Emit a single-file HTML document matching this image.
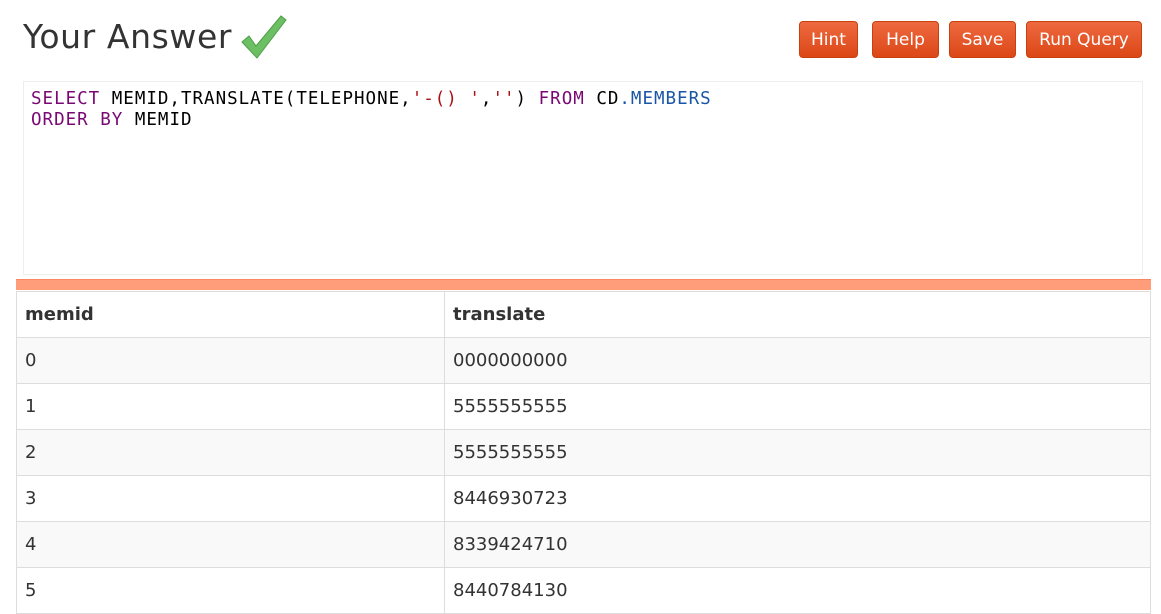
<!DOCTYPE html><html><head><style>
body{margin:0;width:1161px;height:591px;overflow:hidden;background:#fff;font-family:"DejaVu Sans","Liberation Sans",sans-serif;}
h1{position:absolute;left:23px;top:17px;margin:0;font-weight:normal;font-size:33px;color:#333;letter-spacing:0.6px}
.btn{position:absolute;top:21px;height:37px;box-sizing:border-box;border-radius:4px;background:linear-gradient(#ee6a40,#dc4716);border:1px solid #c9400f;color:#fff;font-size:17px;line-height:37px;text-align:center}
.ed{position:absolute;left:23px;top:81px;width:1120px;height:194px;box-sizing:border-box;border:1px solid #eee;font-family:"DejaVu Sans Mono","Liberation Mono",monospace;font-size:17.5px;letter-spacing:1.0px;line-height:21px;padding:7px 0 0 7px;color:#000;white-space:pre}
.k{color:#7a0874}.s{color:#a11}.t{color:#1a56a6}
.bar{position:absolute;left:16px;top:279px;width:1135px;height:10px;background:#ff9c7a;border-top:1px solid #f7875f}
table{position:absolute;left:16px;top:291px;width:1135px;border-collapse:collapse;font-size:18px;color:#333}
td{border:1px solid #ddd;height:45px;padding:0 0 0 8px}
tr:nth-child(even) td{background:#f9f9f9}
th{border:1px solid #ddd;height:45px;text-align:left;padding:0 0 0 8px;font-weight:bold;font-size:18px;color:#333}
</style></head><body>
<h1>Your Answer</h1>
<svg style="position:absolute;left:239px;top:14px" width="48" height="46" viewBox="0 0 48 46"><path d="M3 28 L10 22 L17 32 L42 2 L47 6 L18 44 Z" fill="#6cbf63" stroke="#4f9e47" stroke-width="1"/></svg>
<div class="btn" style="left:799px;width:59px">Hint</div>
<div class="btn" style="left:872px;width:67px">Help</div>
<div class="btn" style="left:949px;width:67px">Save</div>
<div class="btn" style="left:1026px;width:116px">Run Query</div>
<div class="ed"><span class="k">SELECT</span> MEMID,TRANSLATE(TELEPHONE,<span class="s">'-() '</span>,<span class="s">''</span>) <span class="k">FROM</span> CD<span class="t">.MEMBERS</span>
<span class="k">ORDER BY</span> MEMID</div>
<div class="bar"></div>
<table>
<tr><th style="width:419px">memid</th><th>translate</th></tr>
<tr><td>0</td><td>0000000000</td></tr>
<tr><td>1</td><td>5555555555</td></tr>
<tr><td>2</td><td>5555555555</td></tr>
<tr><td>3</td><td>8446930723</td></tr>
<tr><td>4</td><td>8339424710</td></tr>
<tr><td>5</td><td>8440784130</td></tr>
</table>
</body></html>
